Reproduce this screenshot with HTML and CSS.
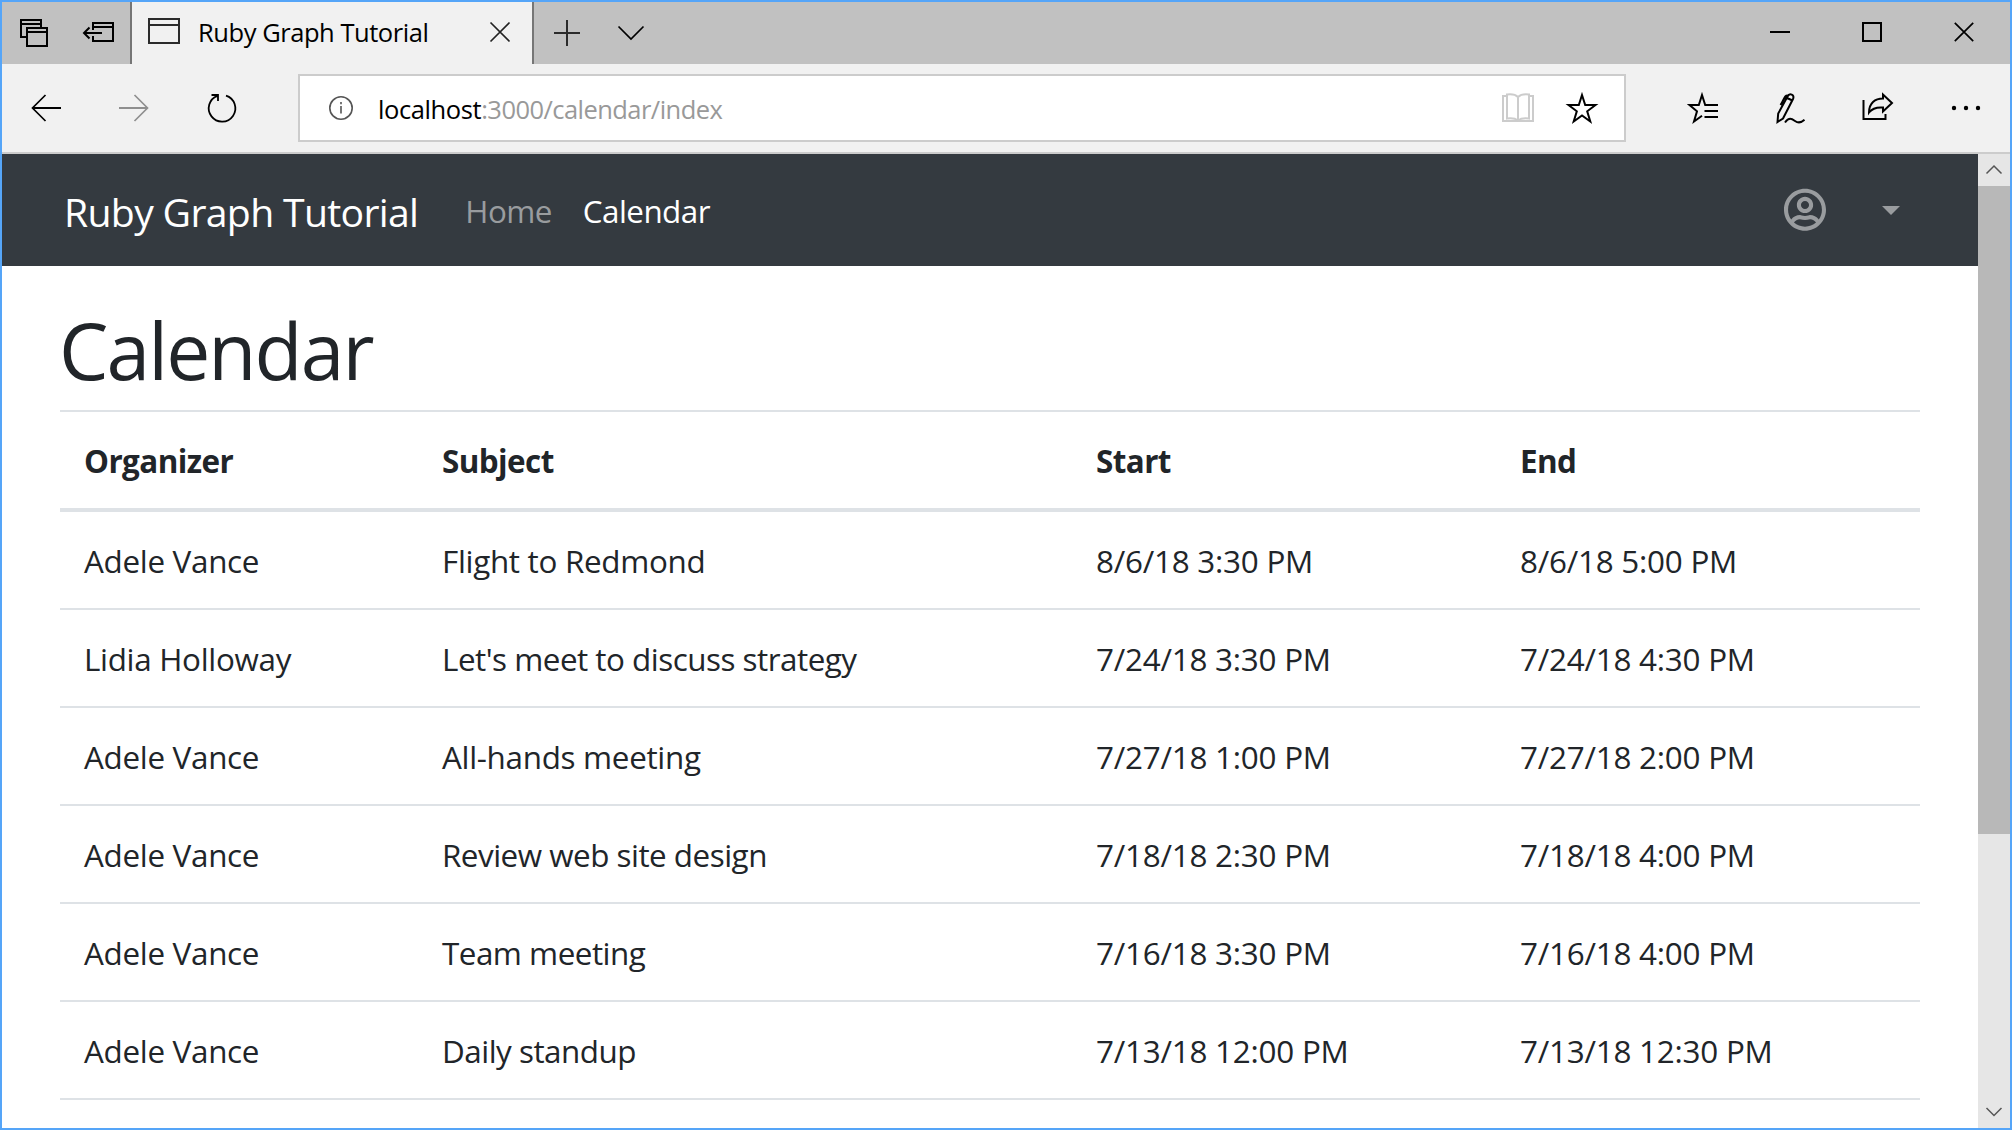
FILE: index.html
```html
<!DOCTYPE html>
<html lang="en">
<head>
<meta charset="utf-8">
<title>Ruby Graph Tutorial</title>
<link rel="stylesheet" href="styles.css">
</head>
<body>
<div class="window">
  <div class="tabstrip">
    <div class="tab-actions">
      <svg class="icon" width="30" height="30" viewBox="19 17 30 30"><path d="M26 36H21V19H41V26M21 23H41M27 27H47V45H27ZM27 31H47"/></svg>
      <svg class="icon" width="34" height="24" viewBox="81 21 34 24"><path d="M93 30V23H113V41H93V36M93 27H113M84 33H102M89.500 27.500L84 33L89.500 38.500"/></svg>
    </div>
    <div class="tab">
      <svg class="icon tab-favicon" width="32" height="26" viewBox="148 18 32 26"><path d="M149 19H179V43H149ZM149 25H179"/></svg>
      <span class="tab-title">Ruby Graph Tutorial</span>
      <svg class="icon tab-close" width="22" height="22" viewBox="489 21 22 22"><path d="M490.500 22.500L509.500 41.500M509.500 22.500L490.500 41.500"/></svg>
    </div>
    <div class="tab-tools">
      <svg class="icon dim" width="26" height="26" viewBox="554 20 26 26"><path d="M554 33H580M567 20V46"/></svg>
      <svg class="icon thin" width="28" height="16" viewBox="617 25 28 16"><path d="M618.500 26.500L631 39L643.500 26.500"/></svg>
    </div>
    <div class="window-buttons">
      <svg class="icon" width="20" height="22" viewBox="1770 21 20 22"><path d="M1770 32H1790"/></svg>
      <svg class="icon" width="20" height="22" viewBox="1862 21 20 22"><path d="M1863 23H1881V41H1863Z"/></svg>
      <svg class="icon thin" width="20" height="22" viewBox="1954 21 20 22"><path d="M1954.800 22.800L1973.200 41.200M1973.200 22.800L1954.800 41.200"/></svg>
    </div>
  </div>

  <div class="toolbar">
    <svg class="icon back" width="32" height="32" viewBox="31 92 32 32"><path d="M61 108H33"/><path class="thin" d="M45.500 95L32.500 108L45.500 121"/></svg>
    <svg class="icon forward" width="32" height="32" viewBox="117 92 32 32"><path d="M119 108H147"/><path class="thin" d="M134.500 95L147.500 108L134.500 121"/></svg>
    <svg class="icon reload" width="32" height="32" viewBox="206 92 32 32"><path d="M226 95.600A13.300 13.300 0 1 1 217.500 95.800M211.500 95H218V101"/></svg>
    <div class="address">
      <svg class="icon info" width="26" height="26" viewBox="328 96 26 26"><circle cx="341" cy="109" r="11.200"/><path d="M341 107V114.500M341 103V105.200"/></svg>
      <span class="url"><span class="host">localhost</span>:3000/calendar/index</span>
      <svg class="icon reader" width="32" height="30" viewBox="1502 94 32 30"><path d="M1507 97H1503V122H1533V97H1529"/><path d="M1518 98C1515 95 1511 95 1507 95.500V119.500C1511 119 1515 119 1518 121.500C1521 119 1525 119 1529 119.500V95.500C1525 95 1521 95 1518 98ZM1518 98V121"/></svg>
      <svg class="icon star" width="34" height="34" viewBox="1565 91 34 34"><path d="M1582 95L1585.200 105H1595.500L1587.200 111.300L1590.300 121.500L1582 115.500L1573.700 121.500L1576.800 111.300L1568.500 105H1578.800Z"/></svg>
    </div>
    <svg class="icon hub" width="34" height="34" viewBox="1685 91 34 34"><path d="M1718 105H1705.200L1702 95L1698.800 105H1689.500L1697 111.300L1694 121.500L1702 115.800M1704.500 111H1718M1704.500 117H1718"/></svg>
    <svg class="icon notes" width="34" height="34" viewBox="1774 91 34 34"><path d="M1777.500 122L1778.200 113.500L1787.500 96.500C1789.500 92.500 1795 94.500 1793 99L1783 118.500ZM1788 95.500C1784.500 94.500 1784 100 1780.500 105M1785 122.500C1789 117 1791.500 118.500 1795 121C1798.500 123.500 1801 123 1804.500 119.800M1787 98L1792.500 100.500"/></svg>
    <svg class="icon share" width="34" height="34" viewBox="1861 91 34 34"><path d="M1863.500 100V119H1885.500V114M1869 112.500C1869 103 1875 98.500 1883 98.500V94.500L1892 103L1883 111.500V107.500C1877 107 1872.500 108 1869 112.500Z"/></svg>
    <svg class="dots" width="34" height="8" viewBox="1949 104 34 8"><circle cx="1954" cy="108" r="2.200"/><circle cx="1966" cy="108" r="2.200"/><circle cx="1978" cy="108" r="2.200"/></svg>
  </div>

  <div class="viewport">
    <div class="page">
      <nav class="navbar">
        <a class="brand">Ruby Graph Tutorial</a>
        <a class="nav-link">Home</a>
        <a class="nav-link active">Calendar</a>
        <div class="user">
          <svg width="42" height="43.400" viewBox="0 0 496 512"><path d="M248 104c-53 0-96 43-96 96s43 96 96 96 96-43 96-96-43-96-96-96zm0 144c-26.500 0-48-21.500-48-48s21.500-48 48-48 48 21.500 48 48-21.500 48-48 48zm0-240C111 8 0 119 0 256s111 248 248 248 248-111 248-248S385 8 248 8zm0 448c-49.700 0-95.100-18.300-130.100-48.400 14.900-23 40.400-38.600 69.600-39.500 20.800 6.400 40.600 9.600 60.500 9.600s39.700-3.100 60.500-9.600c29.200 1 54.700 16.500 69.600 39.500-35 30.100-80.400 48.400-130.100 48.400zm162.700-84.100c-24.400-31.400-62.100-51.900-105.100-51.900-10.200 0-26 9.600-57.600 9.600-31.500 0-47.400-9.600-57.600-9.600-42.900 0-80.600 20.500-105.100 51.900C61.900 339.200 48 299.200 48 256c0-110.300 89.700-200 200-200s200 89.700 200 200c0 43.200-13.900 83.200-37.300 115.900z"/></svg>
          <span class="caret"></span>
        </div>
      </nav>
      <main class="content">
        <h1>Calendar</h1>
        <table>
          <colgroup><col class="c-organizer"><col class="c-subject"><col class="c-start"><col class="c-end"></colgroup>
          <thead>
            <tr><th>Organizer</th><th>Subject</th><th>Start</th><th>End</th></tr>
          </thead>
          <tbody>
            <tr><td>Adele Vance</td><td>Flight to Redmond</td><td class="date">8/6/18 3:30 PM</td><td class="date">8/6/18 5:00 PM</td></tr>
            <tr><td>Lidia Holloway</td><td class="tight">Let's meet to discuss strategy</td><td class="date">7/24/18 3:30 PM</td><td class="date">7/24/18 4:30 PM</td></tr>
            <tr><td>Adele Vance</td><td>All-hands meeting</td><td class="date">7/27/18 1:00 PM</td><td class="date">7/27/18 2:00 PM</td></tr>
            <tr><td>Adele Vance</td><td class="tight">Review web site design</td><td class="date">7/18/18 2:30 PM</td><td class="date">7/18/18 4:00 PM</td></tr>
            <tr><td>Adele Vance</td><td class="tight">Team meeting</td><td class="date">7/16/18 3:30 PM</td><td class="date">7/16/18 4:00 PM</td></tr>
            <tr><td>Adele Vance</td><td class="tight">Daily standup</td><td class="date">7/13/18 12:00 PM</td><td class="date">7/13/18 12:30 PM</td></tr>
          </tbody>
        </table>
      </main>
    </div>
    <div class="scrollbar">
      <svg class="arrow" width="32" height="32" viewBox="0 0 32 32"><path d="M8.500 19.500L16 12L23.500 19.500"/></svg>
      <div class="thumb"></div>
      <svg class="arrow down" width="32" height="32" viewBox="0 0 32 32"><path d="M8.500 12L16 19.500L23.500 12"/></svg>
    </div>
  </div>
</div>
</body>
</html>
```
FILE: styles.css
```css
* { box-sizing: border-box; }
body { margin: 0; font-family: "Open Sans", "Noto Sans", sans-serif; color: #212529; }
svg { display: block; flex: none; }
.icon { fill: none; stroke: #000; stroke-width: 2; }
.thin { stroke-width: 1.700; }
.window { display: flex; flex-direction: column; width: 2012px; height: 1130px; border: 2px solid #55a5f8; background: #fff; overflow: hidden; }

.tabstrip { display: flex; height: 62px; background: #c1c1c1; }
.tab-actions { display: flex; align-items: center; gap: 32px; width: 128px; padding-left: 17px; }
.tab { display: flex; align-items: center; width: 404px; padding: 0 21px 0 16px; background: #f1f1f1; border: solid #767676; border-width: 0 2px; }
.tab-favicon { stroke: #2b2b2b; margin-bottom: 4px; }
.tab-title { flex: 1; margin-left: 18px; padding-bottom: 2px; font-size: 25.500px; line-height: 60px; letter-spacing: -0.450px; color: #000; white-space: nowrap; }
.tab-close { stroke: #222; stroke-width: 1.700; margin-bottom: 2px; }
.tab-tools { display: flex; align-items: center; gap: 37px; padding-left: 20px; }
.dim { stroke: #2b2b2b; }
.window-buttons { display: flex; align-items: center; gap: 72px; margin-left: auto; padding: 0 36px 2px 0; }

.toolbar { display: flex; align-items: center; height: 90px; padding-left: 29px; background: #f1f1f1; border-bottom: 2px solid #ccc; }
.forward { margin-left: 54px; stroke: #8f8f8f; }
.reload { margin-left: 57px; stroke-width: 1.800; }
.address { display: flex; align-items: center; width: 1328px; height: 68px; margin-left: 60px; border: 2px solid #ccc; background: #fff; }
.info { margin-left: 28px; stroke: #555; stroke-width: 1.600; }
.url { flex: 1; margin-left: 24px; padding-top: 1px; font-size: 25.500px; line-height: 64px; letter-spacing: -0.550px; color: #999; }
.host { letter-spacing: -0.400px; color: #000; }
.reader { stroke: #ccc; margin-right: 31px; }
.star { margin-right: 25px; }
.hub { margin-left: 59px; }
.notes { margin-left: 55px; }
.share { margin-left: 53px; }
.dots { margin-left: 54px; }

.viewport { display: flex; flex: 1; min-height: 0; }
.page { flex: 1; overflow: hidden; }
.navbar { display: flex; align-items: center; height: 112px; padding: 0 78px 0 62px; background: #343a40; }
.brand { padding-top: 4px; font-size: 39.200px; line-height: 80px; letter-spacing: -0.680px; color: #fff; }
.nav-link { padding-top: 2px; font-size: 31.400px; line-height: 80px; letter-spacing: -0.550px; color: #999c9f; }
.nav-link.active { color: #fff; margin-left: 31px; }
.brand + .nav-link { margin-left: 47px; }
.user { display: flex; align-items: center; gap: 56px; margin-left: auto; fill: #999c9f; }
.caret { margin-top: 1px; border: solid transparent; border-width: 9.500px 9.500px 0; border-top-color: #999c9f; }
.content { padding: 0 58px; }
h1 { margin: 0 0 0 -1px; height: 144px; padding-top: 36px; font-size: 78.500px; font-weight: 400; line-height: 96px; letter-spacing: -1.900px; }
table { width: 1860px; border-top: 2px solid #dee2e6; border-spacing: 0; table-layout: fixed; }
.c-organizer { width: 358px; }
.c-subject { width: 654px; }
.c-start { width: 424px; }
.c-end { width: 424px; }
th, td { height: 98px; padding: 2px 24px 0; border-bottom: 2px solid #dee2e6; font-size: 31.400px; line-height: 48px; letter-spacing: -0.300px; text-align: left; white-space: nowrap; }
th { height: 100px; border-bottom-width: 4px; font-weight: 700; letter-spacing: -0.570px; }
.tight { letter-spacing: -0.500px; }
.date { letter-spacing: -0.230px; }

.scrollbar { display: flex; flex-direction: column; width: 32px; background: #e6e6e6; }
.thumb { height: 648px; background: #b8b8b8; }
.arrow { fill: none; stroke: #555; stroke-width: 1.500; }
.down { margin-top: auto; }
```
